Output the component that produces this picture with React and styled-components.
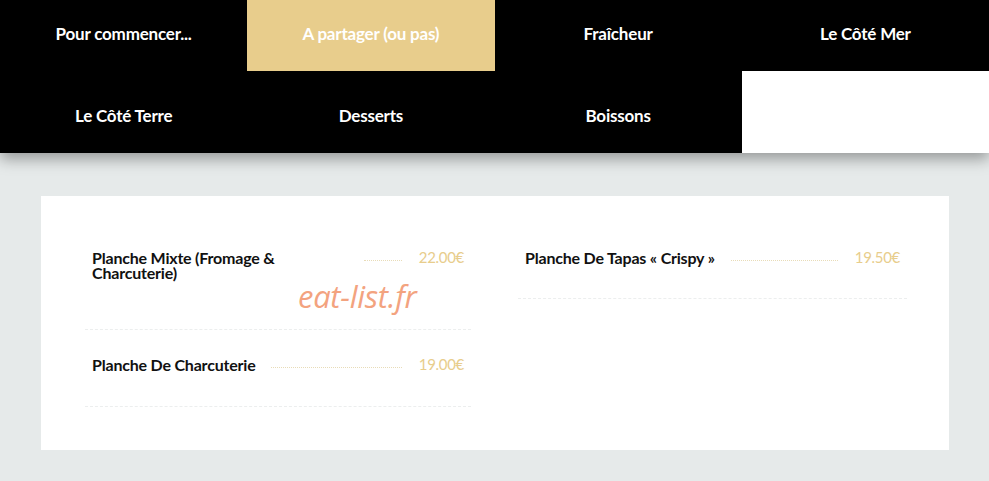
import styled, { createGlobalStyle } from 'styled-components';

const GlobalStyle = createGlobalStyle`
    body {
        margin: 0;
        background: #e6eaea;
        font-family: "Lato", "Noto Sans", sans-serif;
    }
`;

const Page = styled.div`
    width: 989px;
    height: 481px;
    overflow: hidden;
    background: #e6eaea;
`;

const Nav = styled.nav`
    display: grid;
    grid-template-columns: repeat(4, 1fr);
    grid-template-rows: 71px 82px;
    background: #fff;
    box-shadow: 0 6px 14px rgba(0, 0, 0, 0.35);
    position: relative;
`;

const NavItem = styled.a`
    display: flex;
    align-items: center;
    justify-content: center;
    padding: ${(p) => (p.$row === 1 ? '0 0 4px' : '6px 0 0')};
    background: ${(p) => (p.$active ? '#e8cd8c' : '#000')};
    color: #fff;
    font-size: 17px;
    font-weight: 700;
    letter-spacing: -0.2px;
    text-decoration: none;
`;

const Card = styled.section`
    margin: 43px 40px 0 41px;
    height: 254px;
    background: #fff;
    padding: 44px 42px 0 44px;
    box-sizing: border-box;
    display: grid;
    grid-template-columns: 386px 389px;
    column-gap: 47px;
    align-items: start;
    position: relative;
`;

const Column = styled.div`
    display: flex;
    flex-direction: column;
`;

const Item = styled.div`
    display: flex;
    align-items: flex-start;
    padding: ${(p) => p.$pt || 10}px 7px 0 7px;
    height: ${(p) => p.$h}px;
    box-sizing: border-box;
    border-bottom: 1px dashed #eceeee;
`;

const Name = styled.span`
    color: #111;
    font-size: 16px;
    font-weight: 700;
    line-height: 15px;
    letter-spacing: -0.2px;
    max-width: ${(p) => p.$max || 'none'};
    flex-shrink: 0;
`;

const Leader = styled.span`
    flex: 1;
    margin: 10px 17px 0 ${(p) => p.$ml || 16}px;
    border-bottom: 1px dotted #e8dcb8;
`;

const Price = styled.span`
    color: #e8cd8c;
    font-size: 15px;
    font-weight: 400;
    line-height: 15px;
    letter-spacing: -0.3px;
`;

const Watermark = styled.span`
    position: absolute;
    left: 257px;
    top: 79px;
    font-family: "Open Sans", sans-serif;
    font-style: italic;
    font-size: 31px;
    color: #f3a37f;
    letter-spacing: -0.3px;
`;

const nav = [
    'Pour commencer...',
    'A partager (ou pas)',
    'Fraîcheur',
    'Le Côté Mer',
    'Le Côté Terre',
    'Desserts',
    'Boissons',
];

export default function App() {
    return (
        <Page>
            <GlobalStyle />
            <Nav>
                {nav.map((label, i) => (
                    <NavItem key={label} href="#" $active={i === 1} $row={i < 4 ? 1 : 2}>
                        {label}
                    </NavItem>
                ))}
            </Nav>
            <Card>
                <Column>
                    <Item $h={90}>
                        <Name $max="200px">Planche Mixte (Fromage &amp; Charcuterie)</Name>
                        <Leader $ml={72} />
                        <Price>22.00€</Price>
                    </Item>
                    <Item $h={77} $pt={27}>
                        <Name>Planche De Charcuterie</Name>
                        <Leader />
                        <Price>19.00€</Price>
                    </Item>
                </Column>
                <Column>
                    <Item $h={59}>
                        <Name>Planche De Tapas « Crispy »</Name>
                        <Leader />
                        <Price>19.50€</Price>
                    </Item>
                </Column>
                <Watermark>eat-list.fr</Watermark>
            </Card>
        </Page>
    );
}
